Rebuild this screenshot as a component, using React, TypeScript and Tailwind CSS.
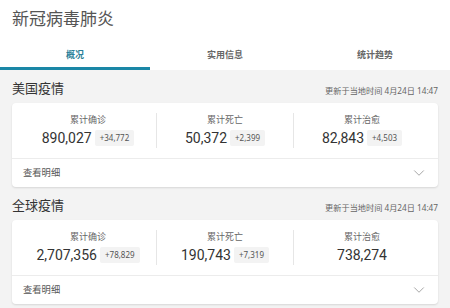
import { ChevronDown } from "lucide-react";

type Stat = { label: string; value: string; delta?: string };

const sections: { title: string; updated: string; stats: Stat[] }[] = [
  {
    title: "美国疫情",
    updated: "更新于当地时间 4月24日 14:47",
    stats: [
      { label: "累计确诊", value: "890,027", delta: "+34,772" },
      { label: "累计死亡", value: "50,372", delta: "+2,399" },
      { label: "累计治愈", value: "82,843", delta: "+4,503" },
    ],
  },
  {
    title: "全球疫情",
    updated: "更新于当地时间 4月24日 14:47",
    stats: [
      { label: "累计确诊", value: "2,707,356", delta: "+78,829" },
      { label: "累计死亡", value: "190,743", delta: "+7,319" },
      { label: "累计治愈", value: "738,274" },
    ],
  },
];

const tabs = ["概况", "实用信息", "统计趋势"];

export default function App() {
  return (
    <div
      className="w-[450px] h-[308px] overflow-hidden bg-[#f3f3f3] text-[#333]"
      style={{ fontFamily: '"Noto Sans", "Noto Sans CJK SC", sans-serif' }}
    >
      <header className="bg-white">
        <h1 className="px-3 pt-[7px] h-[44px] text-[17px] leading-[24px] text-[#555]">
          新冠病毒肺炎
        </h1>
        <nav className="flex h-[26px]">
          {tabs.map((t, i) => (
            <div
              key={t}
              className={
                i === 0
                  ? "flex-1 text-center text-[9px] font-bold leading-[22px] text-[#2b7f99] border-b-[3px] border-[#1a87a6]"
                  : "flex-1 text-center text-[9px] font-bold leading-[22px] text-[#666]"
              }
            >
              {t}
            </div>
          ))}
        </nav>
      </header>

      <main className="px-3">
        {sections.map((s) => (
          <section key={s.title}>
            <div className="flex items-end justify-between h-[33px] pb-[6px]">
              <h2 className="text-[13px] leading-[18px] text-[#333]">{s.title}</h2>
              <span className="text-[8.2px] leading-[10px] text-[#666] pb-[1px]">{s.updated}</span>
            </div>
            <div className="bg-white rounded-[4px] shadow-[0_1px_2px_rgba(0,0,0,0.12)]">
              <div className="flex px-2 pt-[10px] pb-[10px] border-b border-[#ececec]">
                {s.stats.map((st, i) => (
                  <div
                    key={st.label}
                    className={
                      i === 0
                        ? "flex-1 flex flex-col items-center"
                        : "flex-1 flex flex-col items-center border-l border-[#e6e6e6]"
                    }
                  >
                    <div className="text-[9px] leading-[13px] text-[#666]">{st.label}</div>
                    <div className="flex items-center gap-[3px] mt-[2px]">
                      <span className="font-['Roboto',sans-serif] text-[14px] leading-[20px] text-[#333]">
                        {st.value}
                      </span>
                      {st.delta && (
                        <span className="bg-[#f3f3f3] rounded-[2px] px-[5px] text-[8px] leading-[16px] text-[#555]">
                          {st.delta}
                        </span>
                      )}
                    </div>
                  </div>
                ))}
              </div>
              <div className="flex items-center justify-between pl-[11px] pr-[10px] h-[28px]">
                <span className="text-[9.3px] text-[#555]">查看明细</span>
                <ChevronDown size={18} strokeWidth={1} className="text-[#888]" />
              </div>
            </div>
          </section>
        ))}
      </main>
    </div>
  );
}
